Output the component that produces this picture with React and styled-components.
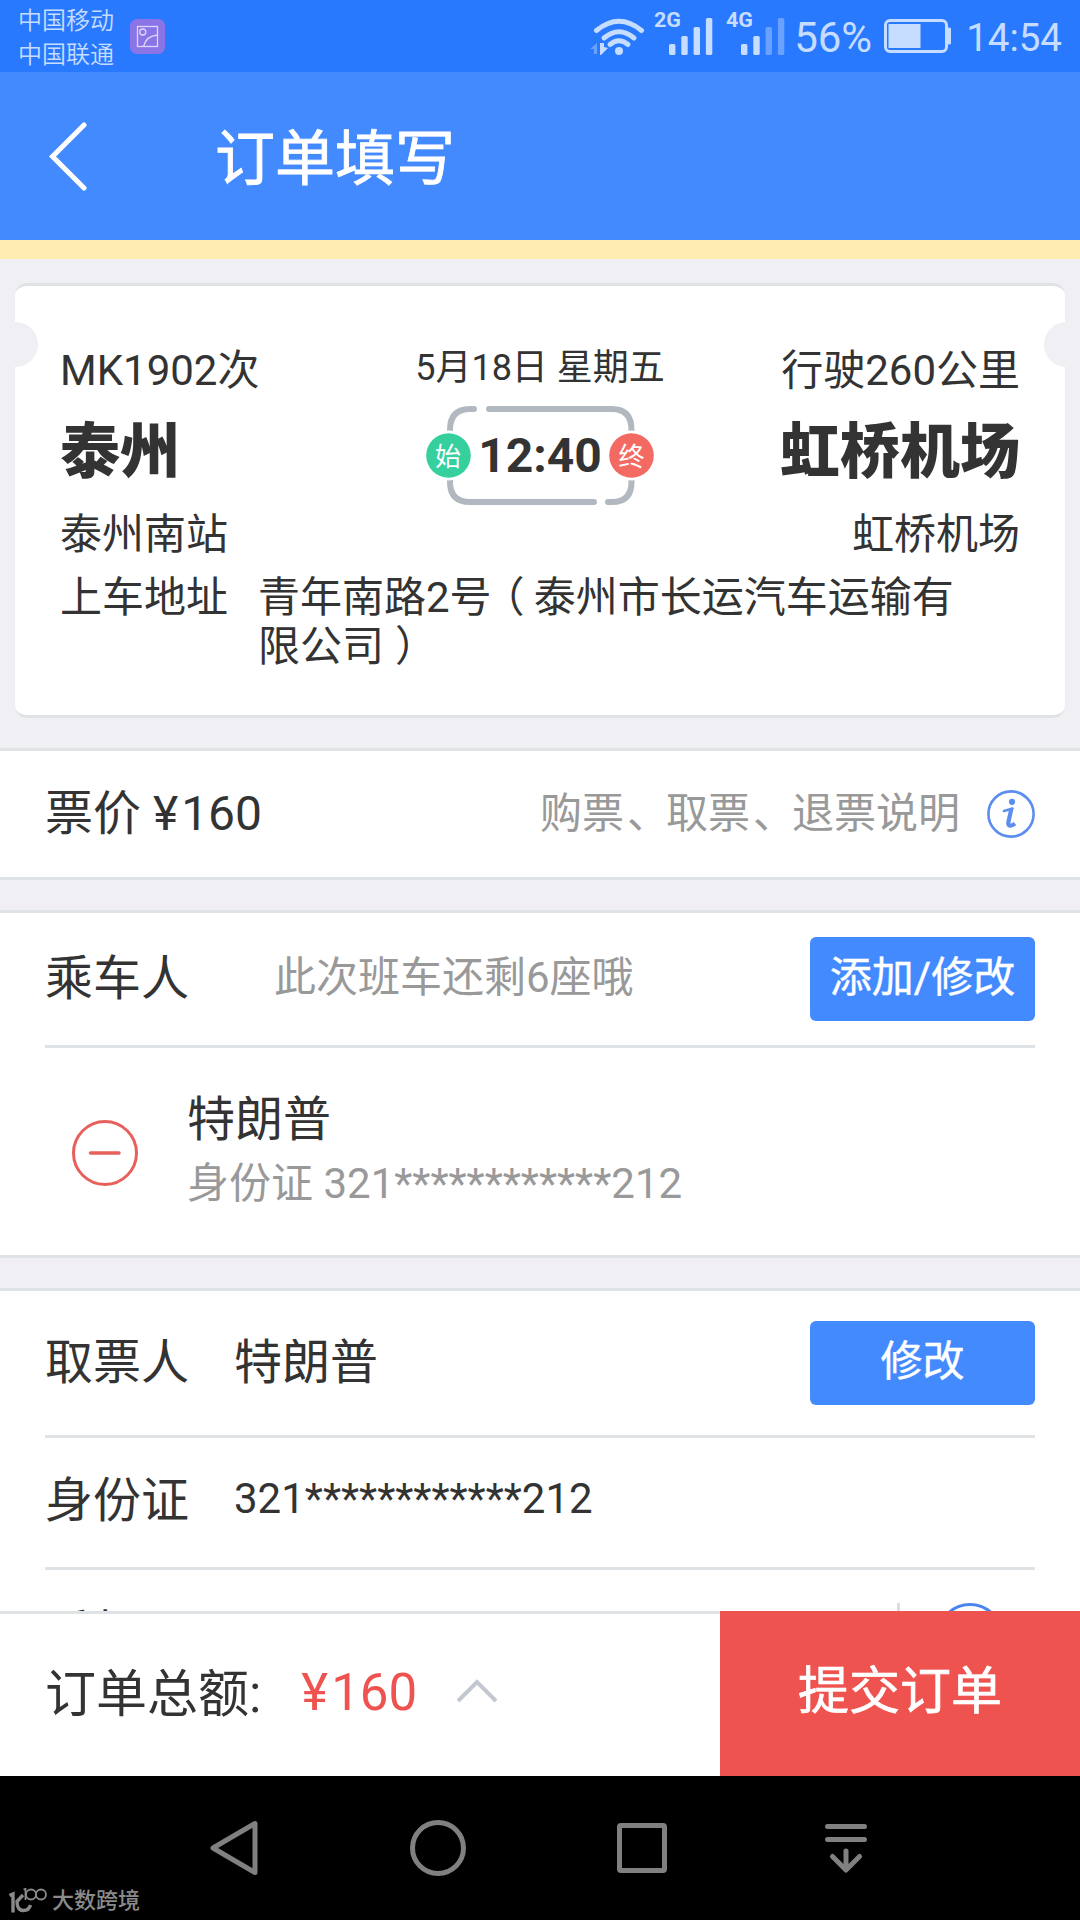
import React from 'react';
import styled, { createGlobalStyle } from 'styled-components';

const GlobalStyle = createGlobalStyle`
  * {
    box-sizing: border-box;
  }
  body {
    margin: 0;
    background: #efeff4;
    font-family: Roboto, 'Noto Sans CJK SC', sans-serif;
    color: #333333;
  }
`;

const Screen = styled.div`
  width: 1080px;
  height: 1920px;
  overflow: hidden;
  display: flex;
  flex-direction: column;
`;

/* status bar */

const StatusBar = styled.div`
  flex: none;
  height: 72px;
  padding: 0 18px;
  display: flex;
  align-items: center;
  background: #2979ff;
  color: #c6ddff;
`;

const Carriers = styled.div`
  width: 96px;
  margin-right: 16px;
  padding-top: 4px;
  font-size: 24px;
  font-weight: 350;
  line-height: 34px;
  white-space: nowrap;
`;

const StatusRight = styled.div`
  height: 72px;
  margin-left: auto;
  display: flex;
  align-items: center;
`;

const StatusText = styled.span`
  font-size: ${(props) => props.$size}px;
  line-height: 48px;
  padding-top: 3px;
`;

const SignalSvg = styled.svg`
  margin-right: ${(props) => props.$space}px;
  overflow: visible;
`;

const NetworkLabel = styled.text`
  font-family: Roboto, sans-serif;
  font-size: 21px;
  font-weight: 700;
  fill: #c6ddff;
`;

const BatteryIcon = styled.svg`
  margin: 0 14px 0 12px;
`;

/* header */

const Header = styled.header`
  flex: none;
  height: 168px;
  padding: 1px 0 0 48px;
  display: flex;
  align-items: center;
  background: #448aff;
  color: #ffffff;
`;

const Title = styled.h1`
  margin: 0 0 0 127px;
  padding-top: 7px;
  font-size: 60px;
  font-weight: 400;
  line-height: 72px;
  -webkit-text-stroke: 0.8px #ffffff;
`;

const NoticeStrip = styled.div`
  flex: none;
  height: 19px;
  background: #ffecb0;
`;

const Content = styled.main`
  flex: 1;
  min-height: 0;
  overflow: hidden;
  padding-top: 24px;
  display: flex;
  flex-direction: column;
  gap: 30px;
`;

/* ticket card */

const Ticket = styled.section`
  position: relative;
  flex: none;
  height: 435px;
  margin: 0 15px;
  padding: 60px 45px 0;
  overflow: hidden;
  background: #ffffff;
  border-top: 3px solid #dfe3e6;
  border-bottom: 3px solid #dfe3e6;
  border-radius: 12px;
`;

const Notch = styled.span`
  position: absolute;
  top: 36px;
  ${(props) => (props.$side === 'left' ? 'left: -22px;' : 'right: -24px;')}
  width: 45px;
  height: 45px;
  border-radius: 50%;
  background: #efeff4;
`;

const TicketTop = styled.div`
  display: grid;
  grid-template-columns: 1fr 260px 1fr;
`;

const Stop = styled.div`
  display: flex;
  flex-direction: column;
  text-align: ${(props) => props.$align};
  font-size: 42px;
  line-height: 50px;
  white-space: nowrap;
`;

const City = styled.strong`
  font-size: 60px;
  font-weight: 900;
  line-height: 72px;
  margin: 21px 0 21px;
`;

const Departure = styled.div`
  display: flex;
  flex-direction: column;
  align-items: center;
`;

const TravelDate = styled.div`
  font-size: 36px;
  line-height: 44px;
  white-space: nowrap;
`;

const DepartIcon = styled.svg`
  display: block;
  margin-top: 15px;
`;

const DepartTime = styled.text`
  font-family: Roboto, sans-serif;
  font-size: 48px;
  font-weight: 700;
  fill: #333333;
`;

const BadgeText = styled.text`
  font-family: 'Noto Sans CJK SC', sans-serif;
  font-size: 26px;
  fill: #ffffff;
`;

const AddressRow = styled.div`
  display: flex;
  margin-top: 13px;
  font-size: 42px;
  line-height: 49px;
`;

const AddressLabel = styled.span`
  flex: none;
  width: 198px;
`;

const AddressText = styled.span`
  width: 720px;
`;

/* full-width punctuation sits in the middle of its cell */
const Punct = styled.span`
  margin: 0 ${(props) => -props.$shift}px 0 ${(props) => props.$shift}px;
`;

/* form panels */

const Panel = styled.section`
  flex: none;
  background: #ffffff;
  border-top: 3px solid #dfe3e6;
  border-bottom: 3px solid #dfe3e6;
`;

const Row = styled.div`
  height: ${(props) => props.$height}px;
  margin: 0 45px;
  display: flex;
  align-items: center;
`;

const Divider = styled.div`
  height: 3px;
  margin: 0 45px;
  background: #dfe3e6;
`;

const Label = styled.span`
  font-size: 48px;
  line-height: 56px;
  white-space: pre;
  width: ${(props) => (props.$width ? `${props.$width}px` : 'auto')};
  padding-bottom: ${(props) => props.$lift || 0}px;
`;

const Value = styled.span`
  font-size: ${(props) => props.$size || 42}px;
  line-height: 50px;
  color: ${(props) => (props.$muted ? '#999999' : '#333333')};
  white-space: nowrap;
  padding-bottom: ${(props) => props.$lift || 0}px;
`;

const Yen = styled.span`
  margin-right: 3px;
`;

const Help = styled.div`
  margin-left: auto;
  display: flex;
  align-items: center;
  gap: 27px;
`;

const Button = styled.button`
  width: 225px;
  height: 84px;
  margin-left: auto;
  padding: 0 0 3px;
  border: 0;
  border-radius: 6px;
  background: #448aff;
  color: #ffffff;
  font-family: inherit;
  font-size: 42px;
  line-height: 50px;
  -webkit-text-stroke: 0.4px #ffffff;
`;

const Passenger = styled.div`
  height: 207px;
  padding: 2px 45px 0 72px;
  display: flex;
  align-items: center;
`;

const PassengerInfo = styled.div`
  margin-left: 49px;
  padding-bottom: 5px;
  display: flex;
  flex-direction: column;
  gap: 11px;
`;

const PhoneActions = styled.div`
  margin: 0 32px 0 auto;
  display: flex;
  align-items: center;
  gap: 37px;
`;

const PhoneDivider = styled.span`
  width: 3px;
  height: 63px;
  background: #d9dce1;
`;

/* footer */

const Footer = styled.footer`
  flex: none;
  height: 165px;
  display: flex;
  background: #ffffff;
`;

const Total = styled.div`
  flex: 1;
  padding: 0 0 1px 45px;
  border-top: 3px solid #dfe3e6;
  display: flex;
  align-items: center;
  font-size: 51px;
  line-height: 60px;
`;

const Amount = styled.span`
  margin: 0 38px 0 40px;
  padding-bottom: 3px;
  color: #ef5350;
`;

const ExpandIcon = styled.svg`
  margin-bottom: 8px;
`;

const Submit = styled.button`
  width: 360px;
  padding: 0 0 13px;
  border: 0;
  background: #ef5350;
  color: #ffffff;
  font-family: inherit;
  font-size: 51px;
  -webkit-text-stroke: 0.7px #ffffff;
`;

const NavBar = styled.nav`
  position: relative;
  flex: none;
  height: 144px;
  padding-left: 208px;
  display: flex;
  gap: 148px;
  align-items: center;
  background: #000000;
`;

const Watermark = styled.div`
  position: absolute;
  left: 9px;
  bottom: 5px;
  display: flex;
  align-items: center;
  gap: 4px;
  color: #8a8a8a;
  font-size: 22px;
  font-weight: 500;
  line-height: 28px;
`;

const SignalIcon = ({ label, strength, space }) => (
  <SignalSvg width="60" height="54" viewBox="0 -3 60 54" $space={space}>
    <NetworkLabel x="0" y="15" textLength="27" lengthAdjust="spacingAndGlyphs">
      {label}
    </NetworkLabel>
    {[11, 19, 28, 37].map((h, i) => (
      <rect
        key={h}
        x={15 + i * 12.3}
        y={43 - h}
        width="6.4"
        height={h}
        rx="1.6"
        fill={i < strength ? '#c6ddff' : '#6aa1ff'}
      />
    ))}
  </SignalSvg>
);

const InfoIcon = () => (
  <svg width="48" height="48" viewBox="0 0 48 48" fill="none" stroke="#5c8df0">
    <circle cx="24" cy="24" r="22.6" strokeWidth="2.6" />
    <circle cx="25" cy="11.8" r="3.1" fill="#5c8df0" stroke="none" />
    <path d="M17 21L25.6 18.6" strokeWidth="2.6" strokeLinecap="round" />
    <path
      d="M24.2 19.6L21.4 32C20.6 36.4 24 36.6 28 33.6"
      strokeWidth="4.2"
      strokeLinejoin="round"
    />
  </svg>
);

const StatusIcons = () => (
  <StatusRight>
    <svg width="64" height="48" viewBox="0 0 64 48" fill="none">
      <g stroke="#c6ddff" strokeWidth="5" strokeLinecap="round">
        <path d="M6.5 18.5Q29 0 51.5 18.5" />
        <path d="M14 26Q29 13.5 44 26" />
        <path d="M20 32.5Q29 25 38 32.5" />
      </g>
      <circle cx="29" cy="39" r="4" fill="#c6ddff" />
      <path d="M0 37l7-6v11H4v-5z" fill="#6aa1ff" />
      <path d="M10 31h4v4l4 1-7 7h-1z" fill="#c6ddff" />
    </svg>
    <SignalIcon label="2G" strength={4} space={12} />
    <SignalIcon label="4G" strength={2} space={8} />
    <StatusText $size={42}>56%</StatusText>
    <BatteryIcon width="68" height="34" viewBox="0 0 68 34">
      <rect x="1.5" y="1.5" width="61" height="31" rx="4.5" fill="none" stroke="#c6ddff" strokeWidth="3" />
      <rect x="4.5" y="5" width="32" height="24" fill="#c6ddff" />
      <rect x="63" y="8.5" width="4" height="17" rx="1.5" fill="#c6ddff" />
    </BatteryIcon>
    <StatusText $size={38.5}>14:54</StatusText>
  </StatusRight>
);

const DepartureBox = () => (
  <DepartIcon width="230" height="102" viewBox="425 405 230 102">
    <g fill="none" stroke="#b1b8bf" strokeWidth="6" strokeLinecap="round">
      <path d="M450 440V430Q450 409 470 409H474" />
      <path d="M489 409H612Q631.5 409 631.5 430V440" />
      <path d="M450 470V482Q450 502 470 502H594" />
      <path d="M608 502H612Q631.5 502 631.5 482V470" />
    </g>
    <circle cx="448.5" cy="455.5" r="25" fill="#ffffff" />
    <circle cx="631.5" cy="455.5" r="25" fill="#ffffff" />
    <circle cx="448.5" cy="455.5" r="22.3" fill="#36d09f" />
    <circle cx="631.5" cy="455.5" r="22.3" fill="#f36a63" />
    <BadgeText x="448" y="465.5" textAnchor="middle">始</BadgeText>
    <BadgeText x="631.5" y="465.5" textAnchor="middle">终</BadgeText>
    <DepartTime x="540" y="472" textAnchor="middle">12:40</DepartTime>
  </DepartIcon>
);

const App = () => {
  return (
    <Screen>
      <GlobalStyle />
      <StatusBar>
        <Carriers>
          <div>中国移动</div>
          <div>中国联通</div>
        </Carriers>
        <svg width="35" height="35" viewBox="0 0 35 35" fill="none">
          <rect width="35" height="35" rx="7" fill="#8b74e6" />
          <g stroke="#ded6fb" strokeWidth="1.3">
            <rect x="7.5" y="7.5" width="20" height="20" />
            <circle cx="12.8" cy="13" r="3" />
            <path d="M13.5 27.5Q16 17 27.5 16" />
          </g>
        </svg>
        <StatusIcons />
      </StatusBar>
      <Header>
        <svg width="40" height="70" viewBox="0 0 40 70">
          <path d="M36 3L4.5 34.5L36 66" fill="none" stroke="#ffffff" strokeWidth="5" strokeLinecap="round" />
        </svg>
        <Title>订单填写</Title>
      </Header>
      <NoticeStrip />
      <Content>
        <Ticket>
          <Notch $side="left" />
          <Notch $side="right" />
          <TicketTop>
            <Stop $align="left">
              <span>MK1902次</span>
              <City>泰州</City>
              <span>泰州南站</span>
            </Stop>
            <Departure>
              <TravelDate>5月18日 星期五</TravelDate>
              <DepartureBox />
            </Departure>
            <Stop $align="right">
              <span>行驶260公里</span>
              <City>虹桥机场</City>
              <span>虹桥机场</span>
            </Stop>
          </TicketTop>
          <AddressRow>
            <AddressLabel>上车地址</AddressLabel>
            <AddressText>
              青年南路2号<Punct $shift={-9}>（</Punct>泰州市长运汽车运输有限公司
              <Punct $shift={11}>）</Punct>
            </AddressText>
          </AddressRow>
        </Ticket>

        <Panel>
          <Row $height={126}>
            <Label $lift={1}>
              票价 <Yen>¥</Yen>160
            </Label>
            <Help>
              <Value $muted $lift={1}>
                购票<Punct $shift={3}>、</Punct>取票<Punct $shift={3}>、</Punct>退票说明
              </Value>
              <InfoIcon />
            </Help>
          </Row>
        </Panel>

        <Panel>
          <Row $height={132}>
            <Label $width={229}>乘车人</Label>
            <Value $muted $lift={3}>此次班车还剩6座哦</Value>
            <Button>添加/修改</Button>
          </Row>
          <Divider />
          <Passenger>
            <svg width="66" height="66" viewBox="0 0 66 66" fill="none" stroke="#e8605c">
              <circle cx="33" cy="33" r="31.5" strokeWidth="3" />
              <path d="M18.5 33H47" strokeWidth="3.5" strokeLinecap="round" />
            </svg>
            <PassengerInfo>
              <Label>特朗普</Label>
              <Value $muted>身份证 321************212</Value>
            </PassengerInfo>
          </Passenger>
        </Panel>

        <Panel>
          <Row $height={144}>
            <Label $width={189}>取票人</Label>
            <Value $size={48}>特朗普</Value>
            <Button>修改</Button>
          </Row>
          <Divider />
          <Row $height={129}>
            <Label $width={189} $lift={3}>身份证</Label>
            <Value $lift={8}>321************212</Value>
          </Row>
          <Divider />
          <Row $height={129}>
            <Label $width={189} $lift={1}>手机号</Label>
            <PhoneActions>
              <PhoneDivider />
              <svg width="66" height="66" viewBox="0 0 66 66">
                <circle cx="33" cy="34" r="31.5" fill="none" stroke="#4a84ee" strokeWidth="3" />
              </svg>
            </PhoneActions>
          </Row>
        </Panel>
      </Content>
      <Footer>
        <Total>
          <span>订单总额:</span>
          <Amount>
            <Yen>¥</Yen>160
          </Amount>
          <ExpandIcon width="44" height="26" viewBox="0 0 44 26">
            <path d="M3 23L22 4L41 23" fill="none" stroke="#c3c7d0" strokeWidth="4" />
          </ExpandIcon>
        </Total>
        <Submit>提交订单</Submit>
      </Footer>
      <NavBar>
        <svg width="52" height="60" viewBox="0 0 52 60">
          <path d="M47 5.5V54.5L5 30z" fill="none" stroke="#808080" strokeWidth="5" strokeLinejoin="round" />
        </svg>
        <svg width="60" height="60" viewBox="0 0 60 60">
          <circle cx="30" cy="30" r="25.5" fill="none" stroke="#808080" strokeWidth="5" />
        </svg>
        <svg width="52" height="54" viewBox="1 0 52 54">
          <rect x="4.5" y="4.5" width="45" height="45" rx="1.5" fill="none" stroke="#808080" strokeWidth="5" />
        </svg>
        <svg width="60" height="54" viewBox="-5 0 60 54">
          <path
            d="M6.5 5.5H43.5M6.5 18.5H43.5M25 30V48M11.5 35.5L25 49L38.5 35.5"
            fill="none"
            stroke="#808080"
            strokeWidth="5"
            strokeLinecap="round"
            strokeLinejoin="round"
          />
        </svg>
        <Watermark>
          <svg width="39" height="26" viewBox="0 0 39 26" fill="none" stroke="#8a8a8a">
            <path d="M0.5 7.5L4 6V24.5" strokeWidth="3.4" />
            <path d="M14 7L8 13.5C8 20 11 22.5 14.5 22.5C18 22.5 20.5 20.5 21.5 17" strokeWidth="3.4" />
            <path d="M14.5 1.5L16.5 0.8V12" strokeWidth="1.8" />
            <circle cx="22" cy="6.5" r="5" strokeWidth="1.8" />
            <circle cx="32" cy="6.5" r="5" strokeWidth="1.8" />
          </svg>
          <span>大数跨境</span>
        </Watermark>
      </NavBar>
    </Screen>
  );
};
export default App;
